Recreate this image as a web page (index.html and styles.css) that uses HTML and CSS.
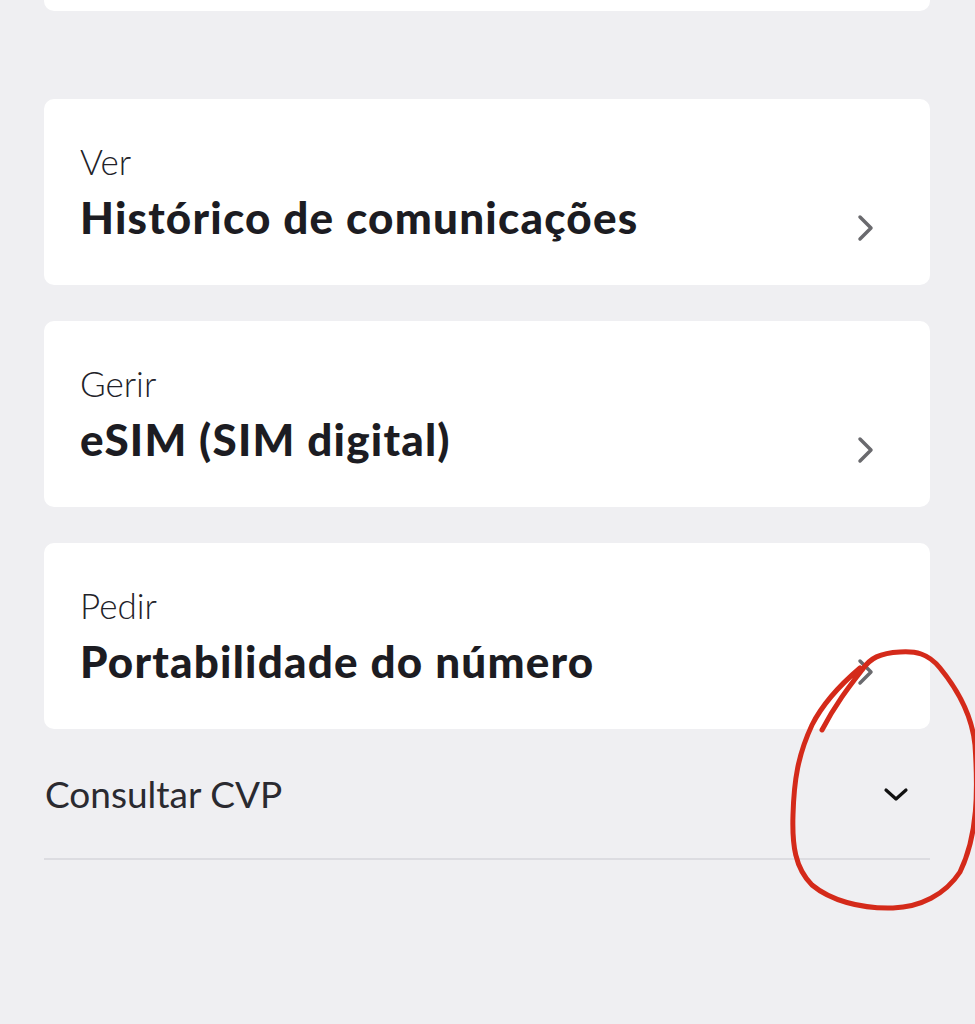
FILE: index.html
```html
<!DOCTYPE html>
<html lang="pt">
<head>
  <meta charset="UTF-8" />
  <meta name="viewport" content="width=device-width, initial-scale=1" />
  <title>Gerir serviços</title>
  <link rel="stylesheet" href="styles.css">
</head>
<body>
  <div class="page">
    <div class="card card-top"></div>

    <div class="list">
      <a class="card item" href="#">
        <div class="item-text">
          <span class="item-label">Ver</span>
          <span class="item-title">Histórico de comunicações</span>
        </div>
        <svg class="chev" viewBox="0 0 20 28" width="20" height="28"><path d="M4 3 L15 14 L4 25" /></svg>
      </a>

      <a class="card item" href="#">
        <div class="item-text">
          <span class="item-label">Gerir</span>
          <span class="item-title">eSIM (SIM digital)</span>
        </div>
        <svg class="chev" viewBox="0 0 20 28" width="20" height="28"><path d="M4 3 L15 14 L4 25" /></svg>
      </a>

      <a class="card item" href="#">
        <div class="item-text">
          <span class="item-label">Pedir</span>
          <span class="item-title">Portabilidade do número</span>
        </div>
        <svg class="chev" viewBox="0 0 20 28" width="20" height="28"><path d="M4 3 L15 14 L4 25" /></svg>
      </a>
    </div>

    <div class="accordion">
      <span class="accordion-title">Consultar CVP</span>
      <svg class="chev-down" viewBox="0 0 26 16" width="26" height="16"><path d="M3 3 L13 12 L23 3" /></svg>
    </div>
  </div>

  <!-- marca a vermelho feita à mão -->
  <svg class="scribble" viewBox="0 0 975 1024" width="975" height="1024">
    <path d="M822 730 C835 705 848 688 862 670 C870 658 880 653 900 652 C915 651 928 653 940 668 C958 690 972 715 975 745 C978 790 978 835 960 872 C945 895 920 907 893 908 C860 909 830 900 812 885 C795 868 792 845 793 815 C794 780 798 755 812 725 C822 705 840 685 860 668" />
  </svg>
</body>
</html>
```

FILE: styles.css
```css
body {
  margin: 0;
  background: #efeff2;
  font-family: Lato, "Open Sans", sans-serif;
  color: #1c1c22;
}
.page {
  padding: 0 45px 0 44px;
}
.card {
  background: #fff;
  border-radius: 10px;
}
.card-top {
  height: 22px;
  margin-top: -11px;
}
.list {
  display: flex;
  flex-direction: column;
  gap: 36px;
  margin-top: 88px;
}
.item {
  display: flex;
  align-items: flex-start;
  justify-content: space-between;
  height: 186px;
  box-sizing: border-box;
  padding: 42px 54px 0 36px;
  text-decoration: none;
  color: inherit;
}
.item-text {
  display: flex;
  flex-direction: column;
}
.item-label {
  font-size: 35px;
  font-weight: 300;
  line-height: 40px;
  color: #222228;
}
.item-title {
  margin-top: 8px;
  font-size: 44px;
  font-weight: 900;
  line-height: 56px;
  letter-spacing: 1.2px;
  color: #1c1c22;
}
.chev {
  margin-top: 73px;
}
.chev path {
  fill: none;
  stroke: #6a6a6e;
  stroke-width: 3.5;
  stroke-linecap: round;
  stroke-linejoin: round;
}
.accordion {
  display: flex;
  align-items: center;
  justify-content: space-between;
  height: 129px;
  padding: 0 21px 0 1px;
  border-bottom: 2px solid #dcdce1;
}
.accordion-title {
  font-size: 37px;
  font-weight: 400;
  color: #2a2a30;
}
.chev-down {
  margin-top: 2px;
}
.chev-down path {
  fill: none;
  stroke: #111;
  stroke-width: 3.2;
  stroke-linecap: round;
  stroke-linejoin: round;
}
.scribble {
  position: absolute;
  top: 0;
  left: 0;
  pointer-events: none;
}
.scribble path {
  fill: none;
  stroke: #d42a1a;
  stroke-width: 5;
  stroke-linecap: round;
  stroke-linejoin: round;
}
```
